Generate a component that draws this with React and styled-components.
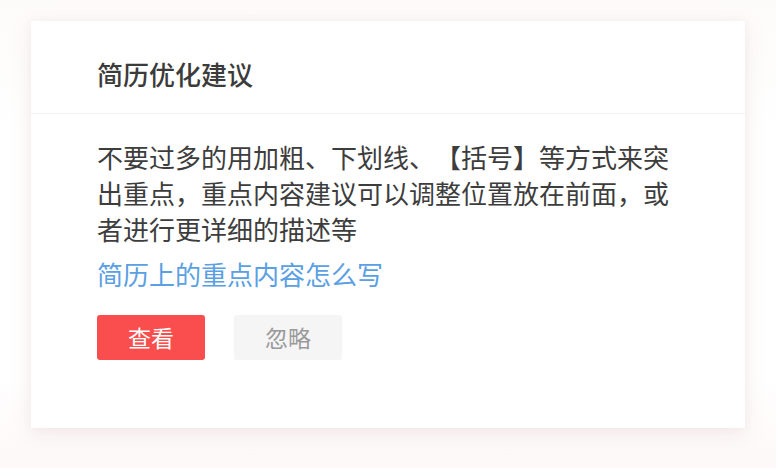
import React from "react";
import styled, { createGlobalStyle } from "styled-components";

const Global = createGlobalStyle`
  html, body { margin: 0; padding: 0; background: #fdfbfa; }
  body { font-family: "Noto Sans CJK SC", "Noto Sans", sans-serif; text-spacing-trim: space-all; }
  * { box-sizing: border-box; }
`;

const Page = styled.div`
  width: 776px;
  height: 468px;
  padding: 21px 31px 0 31px;
  background: linear-gradient(180deg, #fdfbfa 0%, #ffffff 30%, #ffffff 80%, #fdf8f7 100%);
`;

const Card = styled.div`
  width: 714px;
  height: 407px;
  background: #ffffff;
  border-radius: 2px;
  box-shadow: 0 6px 22px rgba(190, 150, 140, 0.16), 0 0 10px rgba(200, 190, 185, 0.12);
  display: flex;
  flex-direction: column;
`;

const Header = styled.div`
  padding: 35px 66px 21px 66px;
  border-bottom: 1px solid #f1f1f1;
`;

const Title = styled.h2`
  margin: 0;
  font-size: 26px;
  line-height: 36px;
  font-weight: 500;
  color: #3b3b3b;
`;

const Body = styled.div`
  padding: 25px 66px 0 66px;
  display: flex;
  flex-direction: column;
`;

const Text = styled.p`
  margin: 0;
  font-size: 26px;
  line-height: 36px;
  color: #3d3d3d;
  text-spacing-trim: space-all;
`;

const Link = styled.a`
  margin-top: 9px;
  font-size: 26px;
  line-height: 36px;
  color: #5aa0e2;
  text-decoration: none;
`;

const Actions = styled.div`
  margin-top: 23px;
  display: flex;
  gap: 29px;
`;

const Button = styled.button`
  width: 108px;
  height: 45px;
  border: none;
  border-radius: 3px;
  font-family: inherit;
  font-size: 23px;
  line-height: 45px;
  padding: 0;
  background: ${(p) => (p.$primary ? "#fa4d4d" : "#f5f5f6")};
  color: ${(p) => (p.$primary ? "#ffffff" : "#9a9a9a")};
`;

export default function App() {
  return (
    <>
      <Global />
      <Page>
        <Card>
          <Header>
            <Title>简历优化建议</Title>
          </Header>
          <Body>
            <Text>
              不要过多的用加粗、下划线、【括号】等方式来突出重点，重点内容建议可以调整位置放在前面，或者进行更详细的描述等
            </Text>
            <Link>简历上的重点内容怎么写</Link>
            <Actions>
              <Button $primary>查看</Button>
              <Button>忽略</Button>
            </Actions>
          </Body>
        </Card>
      </Page>
    </>
  );
}
